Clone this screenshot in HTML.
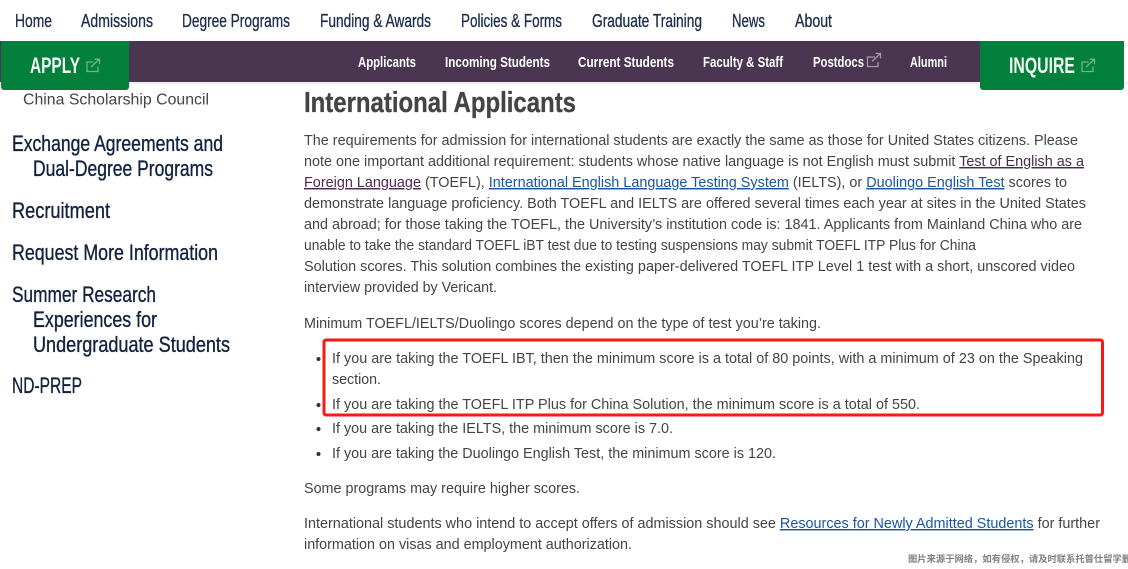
<!DOCTYPE html>
<html lang="en"><head><meta charset="utf-8"><title>International Applicants</title>
<style>
html,body{margin:0;padding:0;background:#fff;width:1128px;height:569px;overflow:hidden}
svg{display:block}
text{font-family:"Liberation Sans",sans-serif;white-space:pre}
.n{font-size:18px;fill:#1c2c4a;stroke:#1c2c4a;stroke-width:.3px;font-family:"Liberation Sans Narrow","Liberation Sans",sans-serif}
.s{font-size:15px;fill:#fff;font-weight:700;font-family:"Liberation Sans Narrow","Liberation Sans",sans-serif}
.h{font-size:22px;fill:#12233f;stroke:#12233f;stroke-width:.35px;font-family:"Liberation Sans Narrow","Liberation Sans",sans-serif}
.b{font-size:14.5px;fill:#444}
.a{fill:#1a55a0;text-decoration:underline}
.v{fill:#4a2a50;text-decoration:underline}
.ic{fill:none;stroke-width:1.3}
</style></head><body>
<svg width="1128" height="569" viewBox="0 0 1128 569" xmlns="http://www.w3.org/2000/svg">
<rect width="1128" height="569" fill="#fff"/>
<text class="n" x="15" y="27" textLength="37" lengthAdjust="spacingAndGlyphs">Home</text>
<text class="n" x="81" y="27" textLength="72" lengthAdjust="spacingAndGlyphs">Admissions</text>
<text class="n" x="182" y="27" textLength="108" lengthAdjust="spacingAndGlyphs">Degree Programs</text>
<text class="n" x="320" y="27" textLength="111" lengthAdjust="spacingAndGlyphs">Funding &amp; Awards</text>
<text class="n" x="461" y="27" textLength="101" lengthAdjust="spacingAndGlyphs">Policies &amp; Forms</text>
<text class="n" x="592" y="27" textLength="110" lengthAdjust="spacingAndGlyphs">Graduate Training</text>
<text class="n" x="732" y="27" textLength="33" lengthAdjust="spacingAndGlyphs">News</text>
<text class="n" x="795" y="27" textLength="37" lengthAdjust="spacingAndGlyphs">About</text>

<rect x="0" y="82" width="1128" height="2" fill="#eee"/>
<rect x="0" y="41" width="1122" height="41" fill="#4a3651"/>
<text class="s" x="358" y="67" textLength="58" lengthAdjust="spacingAndGlyphs">Applicants</text>
<text class="s" x="445" y="67" textLength="105" lengthAdjust="spacingAndGlyphs">Incoming Students</text>
<text class="s" x="578" y="67" textLength="96" lengthAdjust="spacingAndGlyphs">Current Students</text>
<text class="s" x="703" y="67" textLength="80" lengthAdjust="spacingAndGlyphs">Faculty &amp; Staff</text>
<text class="s" x="813" y="67" textLength="51" lengthAdjust="spacingAndGlyphs">Postdocs</text>
<g class="ic" stroke="#a598a8"><path d="M875 57h-7.500v9.500h10.500v-4.500"/><path d="M872 61.500l8-7.500M875.500 53.500h5v5"/></g>
<text class="s" x="910" y="67" textLength="37" lengthAdjust="spacingAndGlyphs">Alumni</text>

<path d="M1 41h128v46a3 3 0 0 1-3 3H4a3 3 0 0 1-3-3z" fill="#02803c"/>
<text x="30" y="73" textLength="50" lengthAdjust="spacingAndGlyphs" style="font-size:22px;font-weight:700;fill:#f2f7f3;font-family:'Liberation Sans Narrow','Liberation Sans',sans-serif">APPLY</text>
<g class="ic" stroke="#6fb58c"><path d="M93.500 62h-6.500v9.500h11v-5"/><path d="M91 67l8-7.500M94.500 59.200h5v5"/></g>
<path d="M980 41h144v46a3 3 0 0 1-3 3h-138a3 3 0 0 1-3-3z" fill="#02803c"/>
<text x="1009" y="73" textLength="66" lengthAdjust="spacingAndGlyphs" style="font-size:22px;font-weight:700;fill:#f2f7f3;font-family:'Liberation Sans Narrow','Liberation Sans',sans-serif">INQUIRE</text>
<g class="ic" stroke="#6fb58c"><path d="M1088.500 62h-6.500v9.500h11v-5"/><path d="M1086 67l8-7.500M1089.500 59.200h5v5"/></g>

<text x="23" y="104.500" textLength="186" lengthAdjust="spacingAndGlyphs" style="font-size:16px;fill:#444">China Scholarship Council</text>
<text class="h" x="12" y="151" textLength="211" lengthAdjust="spacingAndGlyphs">Exchange Agreements and</text>
<text class="h" x="33" y="176" textLength="180" lengthAdjust="spacingAndGlyphs">Dual-Degree Programs</text>
<text class="h" x="12" y="218" textLength="98" lengthAdjust="spacingAndGlyphs">Recruitment</text>
<text class="h" x="12" y="260" textLength="206" lengthAdjust="spacingAndGlyphs">Request More Information</text>
<text class="h" x="12" y="302" textLength="144" lengthAdjust="spacingAndGlyphs">Summer Research</text>
<text class="h" x="33" y="327" textLength="124" lengthAdjust="spacingAndGlyphs">Experiences for</text>
<text class="h" x="33" y="352" textLength="197" lengthAdjust="spacingAndGlyphs">Undergraduate Students</text>
<text class="h" x="12" y="393" textLength="70" lengthAdjust="spacingAndGlyphs">ND-PREP</text>

<text x="304" y="112" textLength="272" lengthAdjust="spacingAndGlyphs" style="font-size:29px;font-weight:700;fill:#444;stroke:#444;stroke-width:.3px;font-family:'Liberation Sans Narrow','Liberation Sans',sans-serif">International Applicants</text>

<text class="b" x="304" y="145" textLength="774" lengthAdjust="spacingAndGlyphs">The requirements for admission for international students are exactly the same as those for United States citizens. Please</text>
<text class="b" x="304" y="166" textLength="780" lengthAdjust="spacingAndGlyphs">note one important additional requirement: students whose native language is not English must submit <tspan class="v">Test of English as a</tspan></text>
<text class="b" x="304" y="187" textLength="763" lengthAdjust="spacingAndGlyphs"><tspan class="v">Foreign Language</tspan> (TOEFL), <tspan class="a">International English Language Testing System</tspan> (IELTS), or <tspan class="a">Duolingo English Test</tspan> scores to</text>
<text class="b" x="304" y="208" textLength="782" lengthAdjust="spacingAndGlyphs">demonstrate language proficiency. Both TOEFL and IELTS are offered several times each year at sites in the United States</text>
<text class="b" x="304" y="229" textLength="778" lengthAdjust="spacingAndGlyphs">and abroad; for those taking the TOEFL, the University’s institution code is: 1841. Applicants from Mainland China who are</text>
<text class="b" x="304" y="250" textLength="672" lengthAdjust="spacingAndGlyphs">unable to take the standard TOEFL iBT test due to testing suspensions may submit TOEFL ITP Plus for China</text>
<text class="b" x="304" y="271" textLength="771" lengthAdjust="spacingAndGlyphs">Solution scores. This solution combines the existing paper-delivered TOEFL ITP Level 1 test with a short, unscored video</text>
<text class="b" x="304" y="292" textLength="193" lengthAdjust="spacingAndGlyphs">interview provided by Vericant.</text>
<text class="b" x="304" y="328" textLength="517" lengthAdjust="spacingAndGlyphs">Minimum TOEFL/IELTS/Duolingo scores depend on the type of test you’re taking.</text>

<g fill="#333"><circle cx="318.500" cy="359" r="2"/><circle cx="318.500" cy="405" r="2"/><circle cx="318.500" cy="429" r="2"/><circle cx="318.500" cy="454" r="2"/></g>
<text class="b" x="332" y="363" textLength="751" lengthAdjust="spacingAndGlyphs">If you are taking the TOEFL IBT, then the minimum score is a total of 80 points, with a minimum of 23 on the Speaking</text>
<text class="b" x="332" y="384" textLength="49" lengthAdjust="spacingAndGlyphs">section.</text>
<text class="b" x="332" y="409" textLength="588" lengthAdjust="spacingAndGlyphs">If you are taking the TOEFL ITP Plus for China Solution, the minimum score is a total of 550.</text>
<text class="b" x="332" y="433" textLength="341" lengthAdjust="spacingAndGlyphs">If you are taking the IELTS, the minimum score is 7.0.</text>
<text class="b" x="332" y="458" textLength="444" lengthAdjust="spacingAndGlyphs">If you are taking the Duolingo English Test, the minimum score is 120.</text>
<rect x="324" y="340" width="778.500" height="75" rx="2" fill="none" stroke="#fa1a12" stroke-width="3"/>

<text class="b" x="304" y="493" textLength="276" lengthAdjust="spacingAndGlyphs">Some programs may require higher scores.</text>
<text class="b" x="304" y="528" textLength="796" lengthAdjust="spacingAndGlyphs">International students who intend to accept offers of admission should see <tspan class="a">Resources for Newly Admitted Students</tspan> for further</text>
<text class="b" x="304" y="549" textLength="328" lengthAdjust="spacingAndGlyphs">information on visas and employment authorization.</text>

<text x="908" y="562" style="font-size:9.300px;fill:#808080;font-weight:700;font-family:'Liberation Sans','Noto Sans CJK SC',sans-serif">图片来源于网络，如有侵权，请及时联系托普仕留学删除</text>
</svg>
</body></html>
